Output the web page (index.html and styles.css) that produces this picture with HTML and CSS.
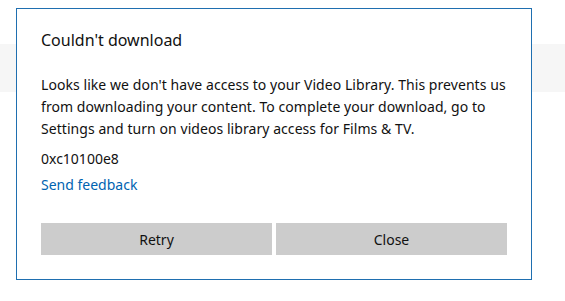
FILE: index.html
```html
<!DOCTYPE html>
<html lang="en">
<head>
  <meta charset="UTF-8">
  <meta name="viewport" content="width=device-width, initial-scale=1.0">
  <title>Couldn't download</title>
  <link rel="stylesheet" href="styles.css">
</head>
<body>
  <div class="backdrop">
    <div class="band"></div>
  </div>

  <div class="dialog">
    <h1 class="dialog-title">Couldn't download</h1>
    <p class="dialog-text">Looks like we don't have access to your Video Library. This prevents us<br>from downloading your content. To complete your download, go to<br>Settings and turn on videos library access for Films &amp; TV.</p>
    <div class="error-code">0xc10100e8</div>
    <a class="feedback" href="#">Send feedback</a>
    <div class="dialog-buttons">
      <button class="btn">Retry</button>
      <button class="btn">Close</button>
    </div>
  </div>
</body>
</html>
```

FILE: styles.css
```css
body {
  font-family: "Noto Sans", Arial, sans-serif;
  background-color: #fff;
  margin: 0;
  width: 565px;
  height: 301px;
  overflow: hidden;
  position: relative;
}

.backdrop {
  padding-top: 44px;
}

.band {
  height: 48px;
  background-color: #f6f6f6;
}

.dialog {
  position: absolute;
  left: 16px;
  top: 8px;
  width: 466px;
  height: 246px;
  padding: 0 24px 24px;
  background-color: #fff;
  border: 1px solid #1f6fb0;
  display: flex;
  flex-direction: column;
  color: #111;
}

.dialog-title {
  font-size: 16px;
  font-weight: normal;
  margin: 19px 0 0;
  line-height: 24px;
}

.dialog-text {
  font-size: 14px;
  line-height: 22px;
  letter-spacing: 0.06px;
  margin: 22px 0 0;
}

.error-code {
  font-size: 14px;
  line-height: 22px;
  margin-top: 8px;
}

.feedback {
  font-size: 14px;
  line-height: 22px;
  margin-top: 4px;
  color: #0063b1;
  text-decoration: none;
  align-self: flex-start;
}

.dialog-buttons {
  margin-top: auto;
  display: flex;
  gap: 4px;
}

.btn {
  flex: 1;
  height: 32px;
  border: none;
  background-color: #cccccc;
  color: #111;
  font-family: inherit;
  font-size: 14px;
  padding: 0;
}
```
